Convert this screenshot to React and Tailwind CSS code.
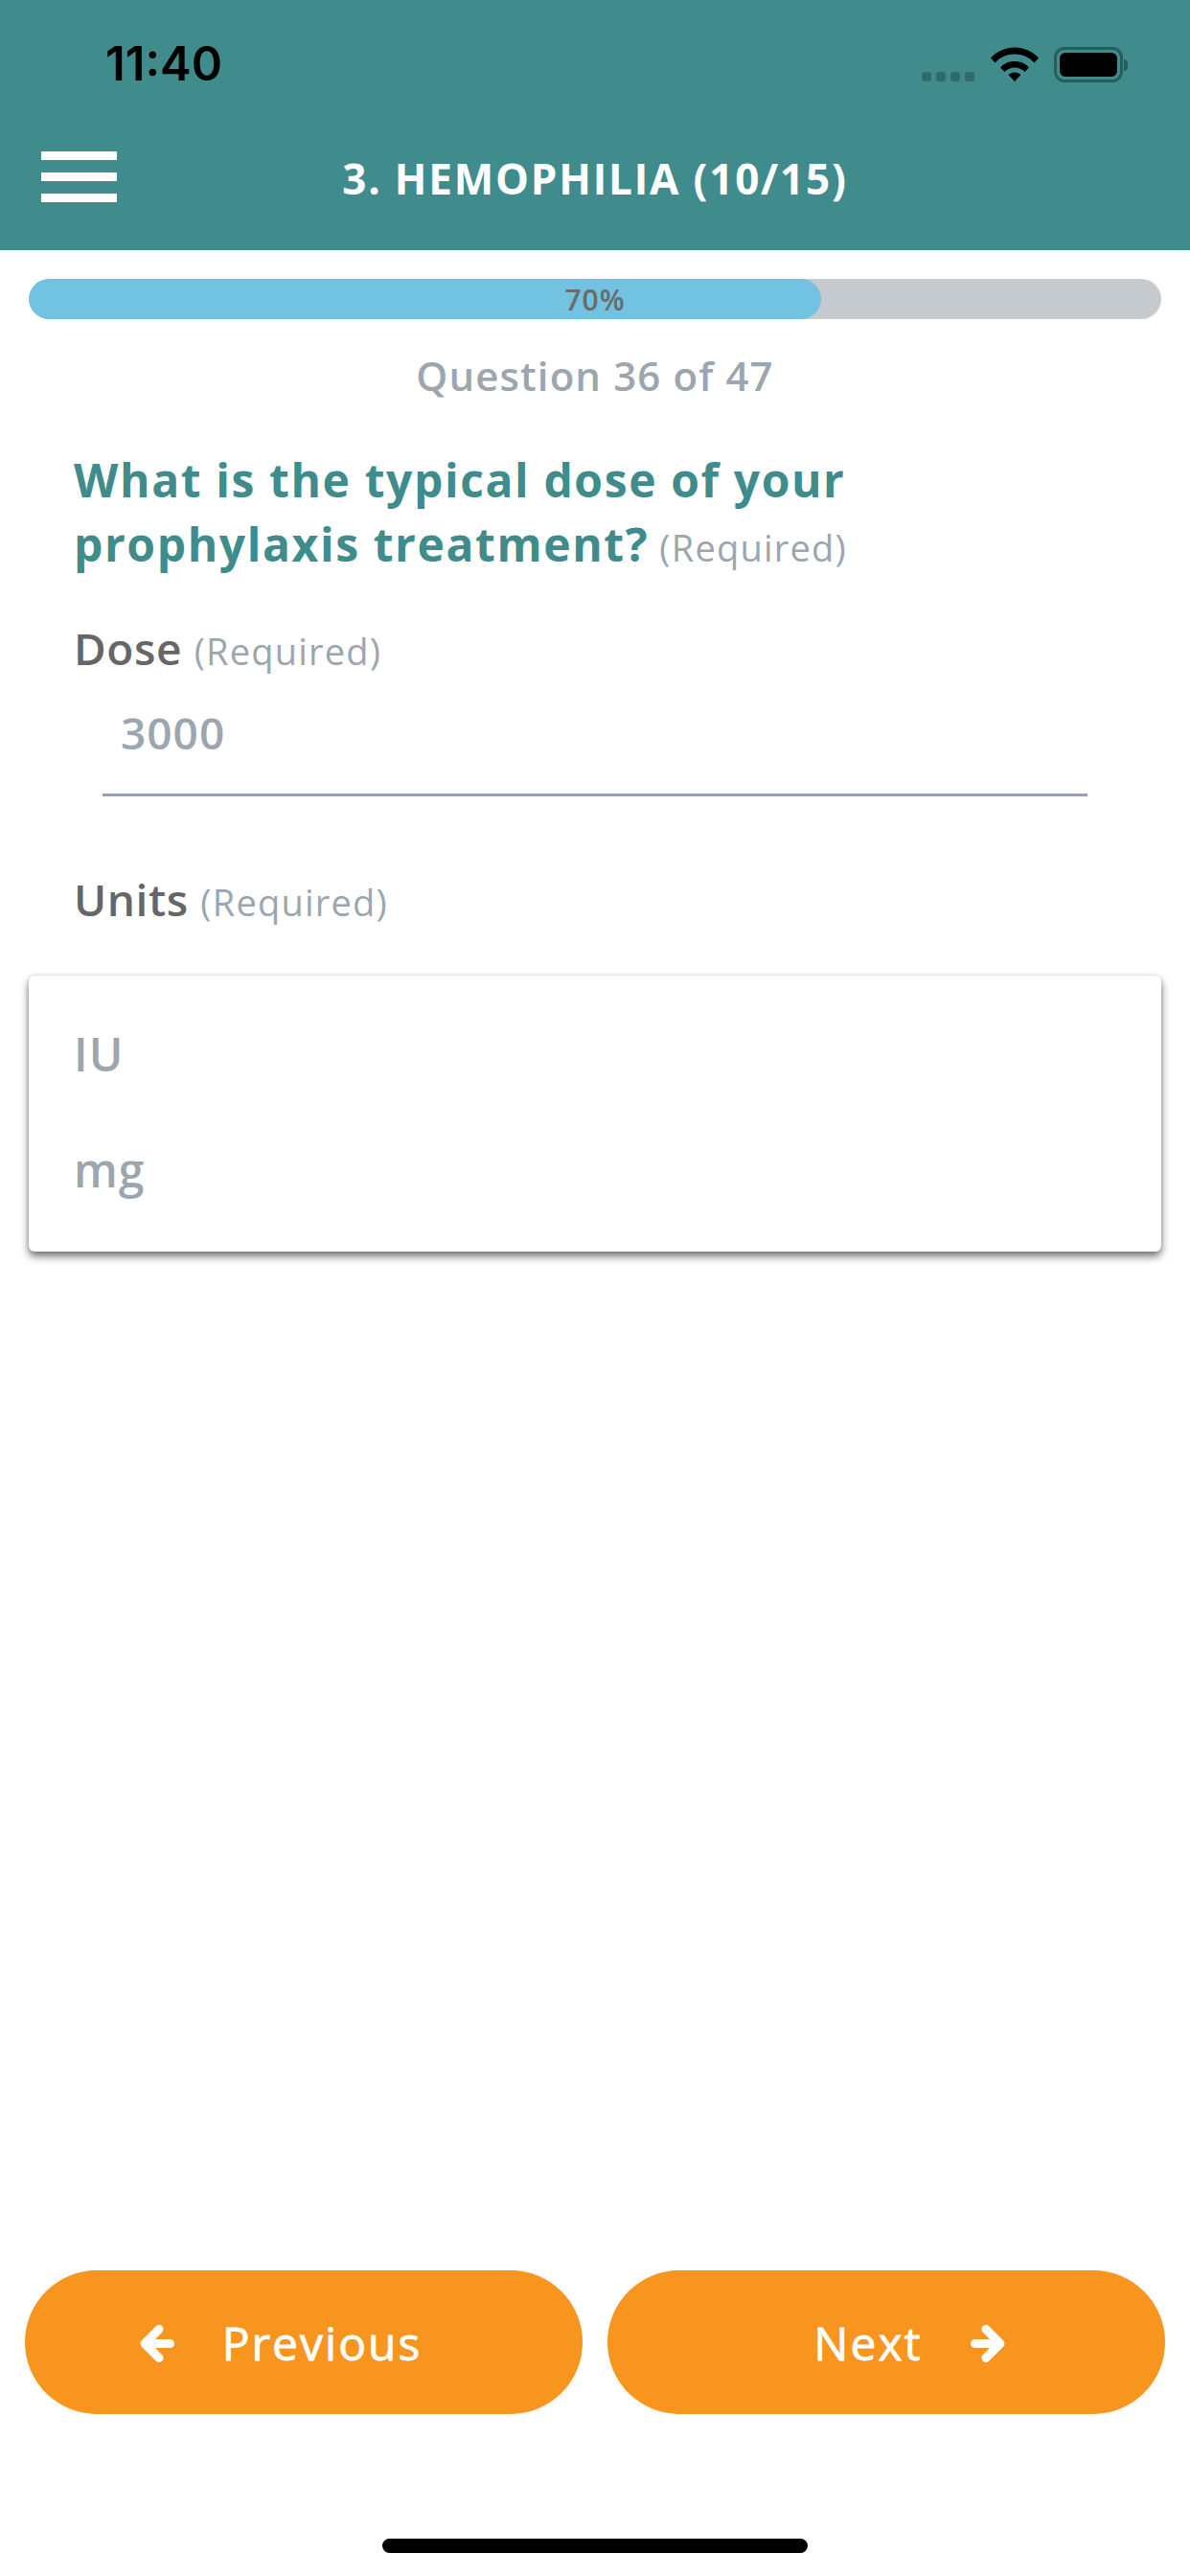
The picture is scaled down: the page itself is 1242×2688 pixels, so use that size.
import React from "react";

const Required = ({ className = "" }) => (
  <span className={`font-normal text-[#9ca6af] tracking-[1.2px] ${className}`}>(Required)</span>
);

const StatusBar = () => (
  <div className="flex items-start justify-between h-[120px] pl-[110px] pr-[65px] pt-[38px]">
    <span className="font-['Inter',sans-serif] text-[49px] leading-[58px] font-semibold text-black">11:40</span>
    <div className="flex items-start pt-[11px]">
      <div className="flex gap-[5px] mt-[26px] mr-[17px]">
        <div className="w-[10px] h-[10px] rounded-[3px] bg-[#2f6b6b]" />
        <div className="w-[10px] h-[10px] rounded-[3px] bg-[#2f6b6b]" />
        <div className="w-[10px] h-[10px] rounded-[3px] bg-[#2f6b6b]" />
        <div className="w-[10px] h-[10px] rounded-[3px] bg-[#2f6b6b]" />
      </div>
      <svg width="50" height="36" viewBox="0 0 50 36" className="mr-[16px]">
        <path d="M0 11.500C6.500 4.500 15 0.500 25 0.500S43.500 4.500 50 11.500L45.500 16.500C40 10.500 33 7.500 25 7.500S10 10.500 4.500 16.500Z" fill="#000" />
        <path d="M10 21.500C14 17 19 15 25 15S36 17 40 21.500L35.500 26C32.500 23 29 21.500 25 21.500S17.500 23 14.500 26Z" fill="#000" />
        <path d="M18.500 29C20 27.500 22.500 26.500 25 26.500S30 27.500 31.500 29L25 36Z" fill="#000" />
      </svg>
      <div className="flex items-center">
        <div className="w-[72px] h-[37px] rounded-[11px] border-[3px] border-[#2a5c5c] p-[3px]">
          <div className="w-full h-full rounded-[6px] bg-black" />
        </div>
        <div className="w-[4px] h-[12px] rounded-r-[4px] bg-[#2a5c5c] ml-[1px]" />
      </div>
    </div>
  </div>
);

const Header = () => (
  <div className="bg-[#408c8c] h-[261px] shrink-0">
    <StatusBar />
    <div className="relative flex items-center justify-center h-[66px] mt-[33px]">
      <div className="absolute left-[43px] top-[5px] flex flex-col gap-[13px]">
        <div className="w-[79px] h-[9px] bg-white" />
        <div className="w-[79px] h-[9px] bg-white" />
        <div className="w-[79px] h-[9px] bg-white" />
      </div>
      <span className="text-white text-[44px] font-bold tracking-[1.8px] leading-[66px]">3. HEMOPHILIA (10/15)</span>
    </div>
  </div>
);

const Arrow = ({ flip = false }) => (
  <svg width="36" height="39" viewBox="0 0 36 39" className={flip ? "rotate-180" : ""}>
    <path d="M20 4.500L5 19.500L20 34.500M5 19.500H31.500" fill="none" stroke="#fff" strokeWidth="9" strokeLinecap="round" strokeLinejoin="round" />
  </svg>
);

const Button = ({ children, className = "" }) => (
  <button className={`flex-1 h-[150px] rounded-full bg-[#f8951f] text-white text-[48px] [-webkit-text-stroke-width:0.8px] tracking-[2px] flex items-center justify-center gap-[50px] pt-[2px] ${className}`}>
    {children}
  </button>
);

export default function App() {
  return (
    <div className="w-[1242px] h-[2688px] bg-white flex flex-col font-['Open_Sans',sans-serif] overflow-hidden">
      <Header />

      {/* progress */}
      <div className="mx-[30px] mt-[30px] h-[42px] rounded-full bg-[#c6cbcf] relative overflow-hidden shrink-0">
        <div className="h-full w-[70%] rounded-full bg-[#72c2e1]" />
        <span className="absolute inset-0 flex items-center justify-center text-[30px] font-semibold text-[#6b6b6b] tracking-[1px]">70%</span>
      </div>
      <div className="text-center mt-[30px] text-[42px] leading-[58px] font-semibold text-[#9ca6af] tracking-[1.1px]">
        Question 36 of 47
      </div>

      {/* question */}
      <div className="px-[77px] mt-[46px] w-[1000px] box-content">
        <h1 className="text-[48px] leading-[67px] font-bold text-[#408c8c] tracking-[1.6px]">
          What is the typical dose of your<br />
          prophylaxis treatment? <Required className="text-[38px] -ml-[3px]" />
        </h1>
      </div>

      <div className="px-[77px] mt-[41px] text-[46px] leading-[60px] font-semibold text-[#666666] tracking-[0.6px]">
        Dose <Required className="text-[38px]" />
      </div>
      <div className="mx-[107px] mt-[24px] border-b-[3px] border-[#9aa0b0] h-[95px] box-content pl-[19px] text-[46px] leading-[62px] font-semibold text-[#9ca6af] tracking-[1px]">
        3000
      </div>

      <div className="px-[77px] mt-[77px] text-[46px] leading-[60px] font-semibold text-[#666666] tracking-[0.6px]">
        Units <Required className="text-[38px]" />
      </div>

      {/* units menu */}
      <div className="mx-[30px] mt-[47px] h-[288px] rounded-[6px] bg-white shadow-[0_5px_8px_rgba(0,0,0,0.55),0_0_4px_rgba(0,0,0,0.12)] px-[47px] pt-[22px] shrink-0">
        <div className="h-[120px] flex items-center text-[48px] font-semibold text-[#9ca6af] tracking-[1px]">IU</div>
        <div className="h-[122px] flex items-center text-[48px] font-semibold text-[#9ca6af] tracking-[1px]">mg</div>
      </div>

      {/* nav */}
      <div className="mt-auto flex gap-[26px] px-[26px]">
        <Button className="pr-[48px]">
          <Arrow />
          <span>Previous</span>
        </Button>
        <Button className="pl-[48px]">
          <span>Next</span>
          <Arrow flip />
        </Button>
      </div>
      <div className="flex justify-center mt-[130px] mb-[24px]">
        <div className="w-[444px] h-[15px] rounded-full bg-black" />
      </div>
    </div>
  );
}
